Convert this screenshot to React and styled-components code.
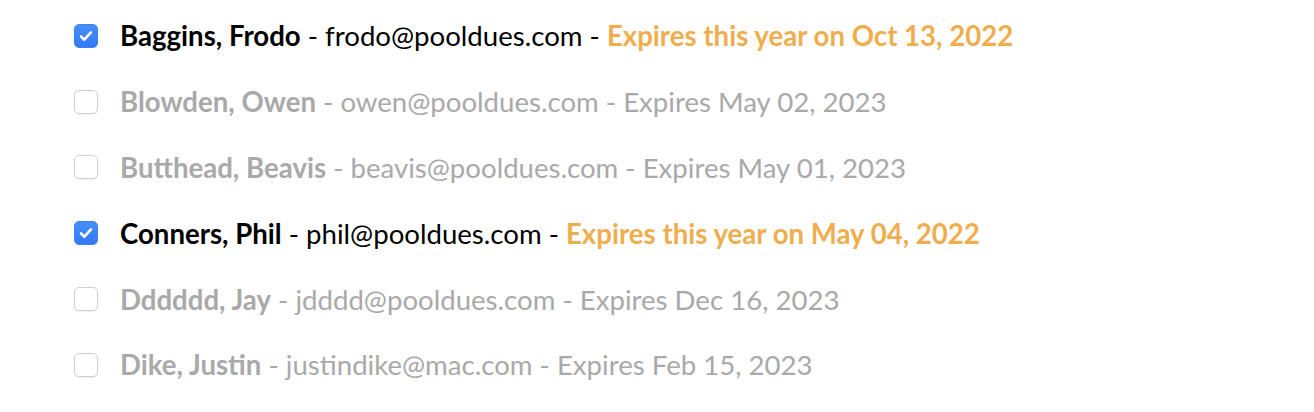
import React from "react";
import styled, { createGlobalStyle } from "styled-components";

const members = [
	{ last: "Baggins", first: "Frodo", email: "frodo@pooldues.com", expires: "Oct 13, 2022", checked: true },
	{ last: "Blowden", first: "Owen", email: "owen@pooldues.com", expires: "May 02, 2023", checked: false },
	{ last: "Butthead", first: "Beavis", email: "beavis@pooldues.com", expires: "May 01, 2023", checked: false },
	{ last: "Conners", first: "Phil", email: "phil@pooldues.com", expires: "May 04, 2022", checked: true },
	{ last: "Dddddd", first: "Jay", email: "jdddd@pooldues.com", expires: "Dec 16, 2023", checked: false },
	{ last: "Dike", first: "Justin", email: "justindike@mac.com", expires: "Feb 15, 2023", checked: false },
];

const App = () => {
	return (
		<>
			<GlobalStyle />
			<MemberList>
				{members.map((m) => (
					<MemberRow key={m.email} $active={m.checked}>
						<CheckBox $checked={m.checked}>
							{m.checked && (
								<svg width="18" height="18" viewBox="0 0 16 16">
									<path
										d="M3.6 8.4 L6.6 11.3 L12.4 4.8"
										fill="none"
										stroke="#fff"
										strokeWidth="2.3"
										strokeLinecap="round"
										strokeLinejoin="round"
									/>
								</svg>
							)}
						</CheckBox>
						<MemberText>
							<Name>
								{m.last}, {m.first}
							</Name>{" "}
							- {m.email} -{" "}
							{m.checked ? (
								<Expiry>Expires this year on {m.expires}</Expiry>
							) : (
								<span>Expires {m.expires}</span>
							)}
						</MemberText>
					</MemberRow>
				))}
			</MemberList>
		</>
	);
};

export default App;

const GlobalStyle = createGlobalStyle`
	body {
		margin: 0;
		background: #fff;
		font-family: Lato, "Noto Sans", sans-serif;
	}
`;

const MemberList = styled.div`
	display: flex;
	flex-direction: column;
	padding: 3px 0 0 74px;
`;

const MemberRow = styled.div`
	display: flex;
	align-items: center;
	gap: 22px;
	height: 65.8px;
	color: ${(p) => (p.$active ? "#000" : "#a9a9a9")};
`;

const CheckBox = styled.div`
	width: 24px;
	height: 24px;
	box-sizing: border-box;
	border-radius: 5px;
	display: flex;
	align-items: center;
	justify-content: center;
	flex-shrink: 0;
	background: ${(p) => (p.$checked ? "linear-gradient(#4690f9, #3478f6)" : "#fff")};
	border: 1px solid ${(p) => (p.$checked ? "#3a82f7" : "#d0d0d0")};
	box-shadow: ${(p) => (p.$checked ? "none" : "0 1px 1px rgba(0,0,0,0.06)")};
`;

const MemberText = styled.div`
	font-size: 27.6px;
	white-space: nowrap;
`;

const Name = styled.span`
	font-weight: 700;
`;

const Expiry = styled.span`
	color: #f0ad4e;
	font-weight: 700;
`;
